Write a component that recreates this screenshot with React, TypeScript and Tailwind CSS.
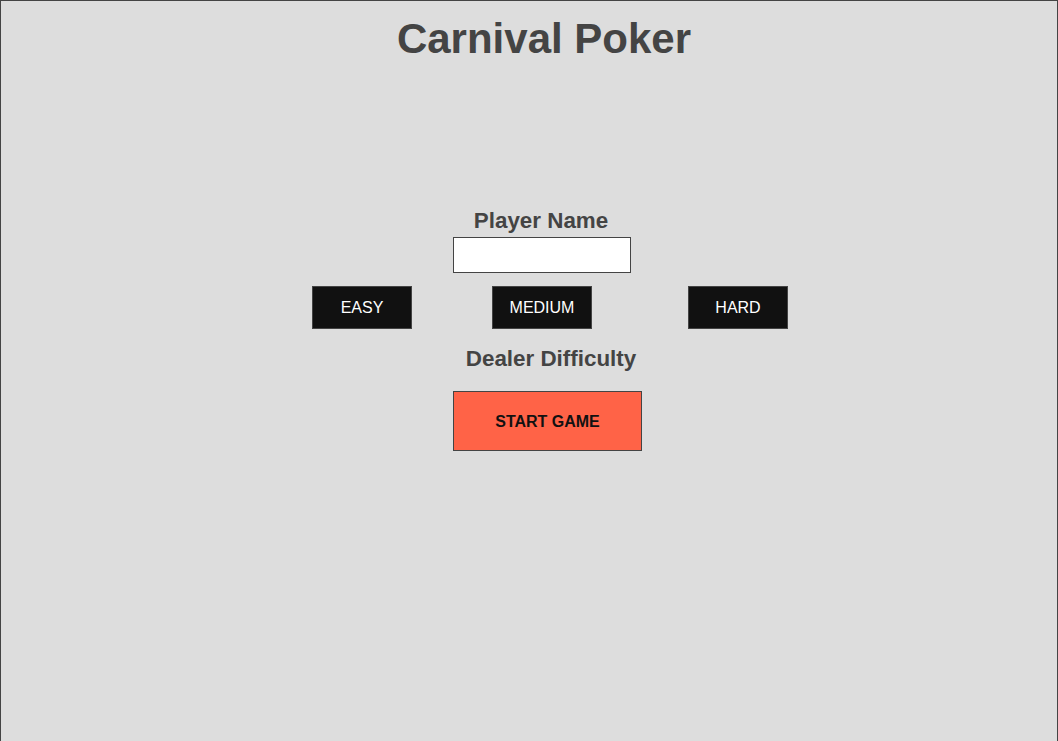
import React, { useState } from 'react';

type Difficulty = 'EASY' | 'MEDIUM' | 'HARD';

const difficulties: { label: Difficulty; offset: string }[] = [
  { label: 'EASY', offset: 'ml-[311px]' },
  { label: 'MEDIUM', offset: 'ml-[80px]' },
  { label: 'HARD', offset: 'ml-[96px]' },
];

const App: React.FC = () => {
  const [name, setName] = useState('');
  const [difficulty, setDifficulty] = useState<Difficulty | null>(null);

  return (
    <div
      className="min-h-[760px] w-[1058px] border border-[#444] bg-[#dddddd] text-[#444]"
      style={{ fontFamily: '"Liberation Sans", Arial, sans-serif' }}
    >
      {/* Title */}
      <h1 className="mt-[13px] pl-[30px] text-center text-[42px] leading-[50px] font-bold">
        Carnival Poker
      </h1>

      {/* Player name */}
      <div className="mt-[144px] pl-[24px] text-center text-[22.4px] leading-[25px] font-bold">
        Player Name
      </div>
      <input
        type="text"
        value={name}
        onChange={(e) => setName(e.target.value)}
        className="mt-[4px] ml-[452px] block h-[36px] w-[178px] border border-[#444] bg-white px-2 text-[16px] text-[#111] outline-none"
      />

      {/* Difficulty buttons */}
      <div className="mt-[13px] flex">
        {difficulties.map((d) => (
          <button
            key={d.label}
            onClick={() => setDifficulty(d.label)}
            className={`${d.offset} h-[43px] w-[100px] border border-[#444] bg-[#111] text-[16px] text-white`}
          >
            {d.label}
          </button>
        ))}
      </div>

      <div className="mt-[17px] pl-[44px] text-center text-[22.4px] leading-[25px] font-bold">
        Dealer Difficulty
      </div>

      {/* Start */}
      <button
        className="mt-[20px] ml-[452px] block h-[60px] w-[189px] border border-[#444] bg-[#ff6347] pt-[2px] text-[16px] font-bold text-[#111]"
        data-difficulty={difficulty ?? ''}
      >
        START GAME
      </button>
    </div>
  );
};

export default App;
